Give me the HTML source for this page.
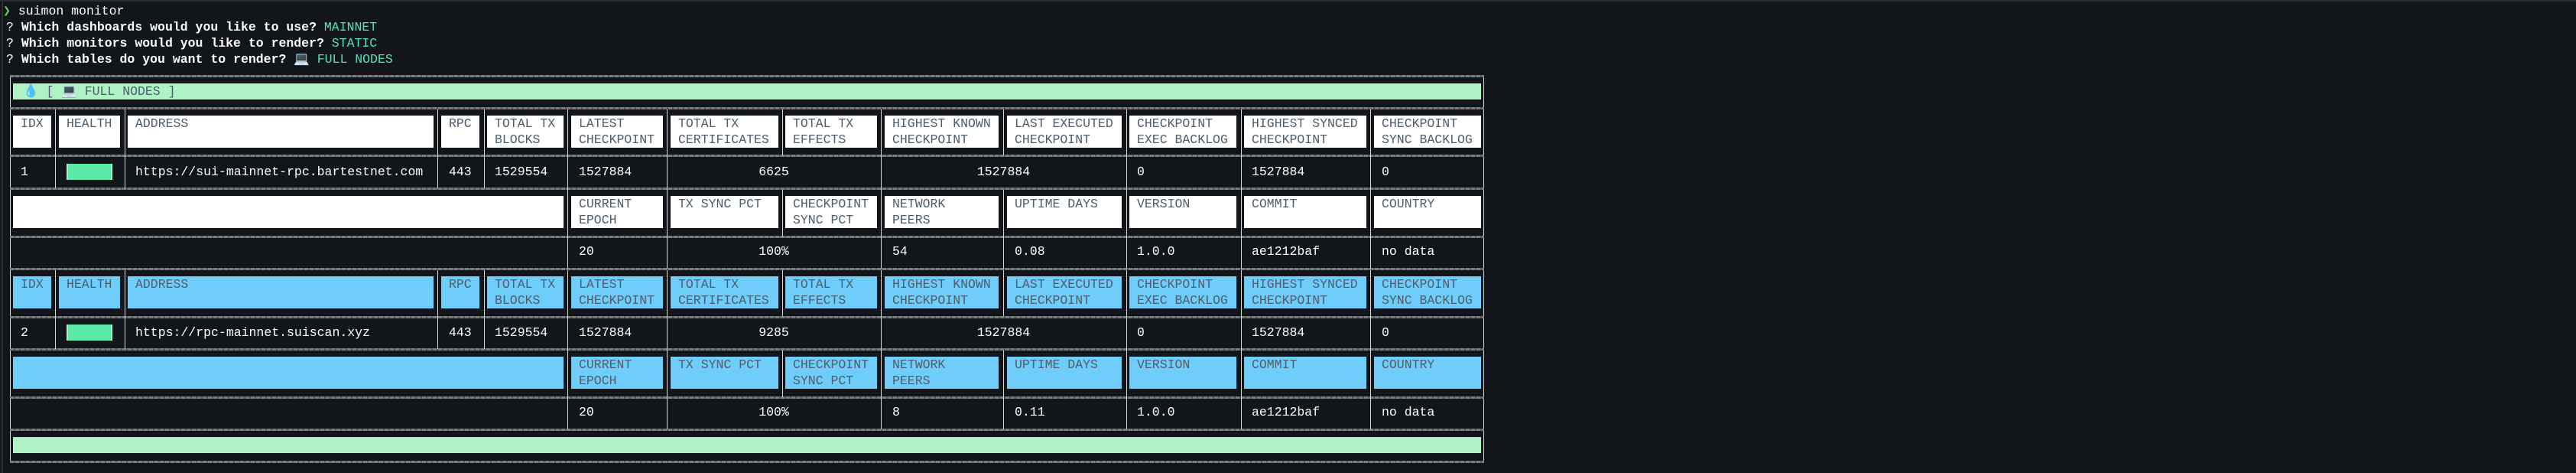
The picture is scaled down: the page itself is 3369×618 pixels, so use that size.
<!DOCTYPE html>
<html><head><meta charset="utf-8"><style>
*{margin:0;padding:0;box-sizing:border-box}
body{width:3369px;height:618px;background:#12161b;overflow:hidden;position:relative;font-family:"Liberation Mono","DejaVu Sans Mono",monospace;font-size:16.5px;line-height:21px;color:#fff}
div,span.a{position:absolute}
.t{white-space:pre;color:#fff}
.h{position:absolute;background:#fff;color:#4d5d6b;padding-left:10px;white-space:pre;line-height:21px}
.bl{background:#6fcdfb}
.hs{position:absolute;left:13px;width:1928px;height:3px;background:repeating-linear-gradient(90deg,#7a7d80 0 5px,#55595d 5px 7px)}
.vs{position:absolute;width:1px;background:#d8d8d8}
.d{position:absolute;white-space:pre;color:#fff}
.c{text-align:center}
.g{position:absolute;background:#5ce8a6;border-left:2px solid #9ff5cf;border-right:2px solid #9ff5cf}
</style></head><body>
<div class="t" style="left:4px;top:4px"><span style="color:#5fd35f">❯</span> suimon monitor</div>
<div class="t" style="left:8px;top:25px">? <b>Which dashboards would you like to use?</b> <span style="color:#4fe3c1">MAINNET</span></div>
<div class="t" style="left:8px;top:46px">? <b>Which monitors would you like to render?</b> <span style="color:#4fe3c1">STATIC</span></div>
<div class="t" style="left:8px;top:67px">? <b>Which tables do you want to render?</b> 💻 <span style="color:#4fe3c1">FULL NODES</span></div>

<div style="left:0;top:0;width:3369px;height:2px;background:#2a2e33"></div>
<div style="left:2px;top:0;width:2px;height:618px;background:#2a2e33"></div>

<!-- outer -->
<div class="vs" style="left:13px;top:99px;height:505px"></div>
<div class="vs" style="left:1940px;top:99px;height:505px"></div>
<div class="hs" style="top:98px"></div>
<div style="left:17px;top:109px;width:1920px;height:21px;background:#aef2c6;color:#4d5d6b;padding-left:13px;white-space:pre">💧 [ 💻 FULL NODES ]</div>

<div class="hs" style="top:140px"></div>
<div class="hs" style="top:202px"></div>
<div class="hs" style="top:245px"></div>
<div class="hs" style="top:308px"></div>
<div class="hs" style="top:350px"></div>
<div class="hs" style="top:413px"></div>
<div class="hs" style="top:455px"></div>
<div class="hs" style="top:518px"></div>
<div class="hs" style="top:560px"></div>
<div class="hs" style="top:602px"></div>

<!-- vertical separators table 1 rows 1-2 -->
<div class="vs" style="left:72px;top:143px;height:103px"></div>
<div class="vs" style="left:163px;top:143px;height:103px"></div>
<div class="vs" style="left:572px;top:143px;height:103px"></div>
<div class="vs" style="left:633px;top:143px;height:103px"></div>
<div class="vs" style="left:742px;top:143px;height:208px"></div>
<div class="vs" style="left:872px;top:143px;height:208px"></div>
<div class="vs" style="left:1023px;top:143px;height:60px"></div>
<div class="vs" style="left:1023px;top:248px;height:61px"></div>
<div class="vs" style="left:1152px;top:143px;height:208px"></div>
<div class="vs" style="left:1312px;top:143px;height:60px"></div>
<div class="vs" style="left:1312px;top:248px;height:103px"></div>
<div class="vs" style="left:1473px;top:143px;height:208px"></div>
<div class="vs" style="left:1623px;top:143px;height:208px"></div>
<div class="vs" style="left:1792px;top:143px;height:208px"></div>
<!-- table 2 -->
<div class="vs" style="left:72px;top:353px;height:103px"></div>
<div class="vs" style="left:163px;top:353px;height:103px"></div>
<div class="vs" style="left:572px;top:353px;height:103px"></div>
<div class="vs" style="left:633px;top:353px;height:103px"></div>
<div class="vs" style="left:742px;top:353px;height:208px"></div>
<div class="vs" style="left:872px;top:353px;height:208px"></div>
<div class="vs" style="left:1023px;top:353px;height:60px"></div>
<div class="vs" style="left:1023px;top:458px;height:61px"></div>
<div class="vs" style="left:1152px;top:353px;height:208px"></div>
<div class="vs" style="left:1312px;top:353px;height:60px"></div>
<div class="vs" style="left:1312px;top:458px;height:103px"></div>
<div class="vs" style="left:1473px;top:353px;height:208px"></div>
<div class="vs" style="left:1623px;top:353px;height:208px"></div>
<div class="vs" style="left:1792px;top:353px;height:208px"></div>

<!-- table 1 header -->
<div class="h" style="left:17px;top:151px;width:50px;height:42px">IDX</div>
<div class="h" style="left:77px;top:151px;width:80px;height:42px">HEALTH</div>
<div class="h" style="left:167px;top:151px;width:400px;height:42px">ADDRESS</div>
<div class="h" style="left:577px;top:151px;width:50px;height:42px">RPC</div>
<div class="h" style="left:637px;top:151px;width:100px;height:42px">TOTAL TX
BLOCKS</div>
<div class="h" style="left:747px;top:151px;width:120px;height:42px">LATEST
CHECKPOINT</div>
<div class="h" style="left:877px;top:151px;width:141px;height:42px;overflow:hidden">TOTAL TX
CERTIFICATES</div>
<div class="h" style="left:1027px;top:151px;width:120px;height:42px">TOTAL TX
EFFECTS</div>
<div class="h" style="left:1157px;top:151px;width:149px;height:42px">HIGHEST KNOWN
CHECKPOINT</div>
<div class="h" style="left:1317px;top:151px;width:150px;height:42px">LAST EXECUTED
CHECKPOINT</div>
<div class="h" style="left:1477px;top:151px;width:140px;height:42px">CHECKPOINT
EXEC BACKLOG</div>
<div class="h" style="left:1627px;top:151px;width:160px;height:42px">HIGHEST SYNCED
CHECKPOINT</div>
<div class="h" style="left:1797px;top:151px;width:140px;height:42px">CHECKPOINT
SYNC BACKLOG</div>

<div class="d" style="left:27px;top:214px">1</div>
<div class="g" style="left:87px;top:214px;width:60px;height:21px"></div>
<div class="d" style="left:177px;top:214px">https://sui-mainnet-rpc.bartestnet.com</div>
<div class="d" style="left:587px;top:214px">443</div>
<div class="d" style="left:647px;top:214px">1529554</div>
<div class="d" style="left:757px;top:214px">1527884</div>
<div class="d c" style="left:872px;top:214px;width:280px">6625</div>
<div class="d c" style="left:1152px;top:214px;width:321px">1527884</div>
<div class="d" style="left:1487px;top:214px">0</div>
<div class="d" style="left:1637px;top:214px">1527884</div>
<div class="d" style="left:1807px;top:214px">0</div>

<div class="h" style="left:17px;top:256px;width:720px;height:42px"></div>
<div class="h" style="left:747px;top:256px;width:120px;height:42px">CURRENT
EPOCH</div>
<div class="h" style="left:877px;top:256px;width:141px;height:42px">TX SYNC PCT</div>
<div class="h" style="left:1027px;top:256px;width:120px;height:42px">CHECKPOINT
SYNC PCT</div>
<div class="h" style="left:1157px;top:256px;width:149px;height:42px">NETWORK
PEERS</div>
<div class="h" style="left:1317px;top:256px;width:150px;height:42px">UPTIME DAYS</div>
<div class="h" style="left:1477px;top:256px;width:140px;height:42px">VERSION</div>
<div class="h" style="left:1627px;top:256px;width:160px;height:42px">COMMIT</div>
<div class="h" style="left:1797px;top:256px;width:140px;height:42px">COUNTRY</div>

<div class="d" style="left:757px;top:318px">20</div>
<div class="d c" style="left:872px;top:318px;width:280px">100%</div>
<div class="d" style="left:1167px;top:318px">54</div>
<div class="d" style="left:1327px;top:318px">0.08</div>
<div class="d" style="left:1487px;top:318px">1.0.0</div>
<div class="d" style="left:1637px;top:318px">ae1212baf</div>
<div class="d" style="left:1807px;top:318px">no data</div>

<!-- table 2 header -->
<div class="h bl" style="left:17px;top:361px;width:50px;height:42px">IDX</div>
<div class="h bl" style="left:77px;top:361px;width:80px;height:42px">HEALTH</div>
<div class="h bl" style="left:167px;top:361px;width:400px;height:42px">ADDRESS</div>
<div class="h bl" style="left:577px;top:361px;width:50px;height:42px">RPC</div>
<div class="h bl" style="left:637px;top:361px;width:100px;height:42px">TOTAL TX
BLOCKS</div>
<div class="h bl" style="left:747px;top:361px;width:120px;height:42px">LATEST
CHECKPOINT</div>
<div class="h bl" style="left:877px;top:361px;width:141px;height:42px;overflow:hidden">TOTAL TX
CERTIFICATES</div>
<div class="h bl" style="left:1027px;top:361px;width:120px;height:42px">TOTAL TX
EFFECTS</div>
<div class="h bl" style="left:1157px;top:361px;width:149px;height:42px">HIGHEST KNOWN
CHECKPOINT</div>
<div class="h bl" style="left:1317px;top:361px;width:150px;height:42px">LAST EXECUTED
CHECKPOINT</div>
<div class="h bl" style="left:1477px;top:361px;width:140px;height:42px">CHECKPOINT
EXEC BACKLOG</div>
<div class="h bl" style="left:1627px;top:361px;width:160px;height:42px">HIGHEST SYNCED
CHECKPOINT</div>
<div class="h bl" style="left:1797px;top:361px;width:140px;height:42px">CHECKPOINT
SYNC BACKLOG</div>

<div class="d" style="left:27px;top:424px">2</div>
<div class="g" style="left:87px;top:424px;width:60px;height:21px"></div>
<div class="d" style="left:177px;top:424px">https://rpc-mainnet.suiscan.xyz</div>
<div class="d" style="left:587px;top:424px">443</div>
<div class="d" style="left:647px;top:424px">1529554</div>
<div class="d" style="left:757px;top:424px">1527884</div>
<div class="d c" style="left:872px;top:424px;width:280px">9285</div>
<div class="d c" style="left:1152px;top:424px;width:321px">1527884</div>
<div class="d" style="left:1487px;top:424px">0</div>
<div class="d" style="left:1637px;top:424px">1527884</div>
<div class="d" style="left:1807px;top:424px">0</div>

<div class="h bl" style="left:17px;top:466px;width:720px;height:42px"></div>
<div class="h bl" style="left:747px;top:466px;width:120px;height:42px">CURRENT
EPOCH</div>
<div class="h bl" style="left:877px;top:466px;width:141px;height:42px">TX SYNC PCT</div>
<div class="h bl" style="left:1027px;top:466px;width:120px;height:42px">CHECKPOINT
SYNC PCT</div>
<div class="h bl" style="left:1157px;top:466px;width:149px;height:42px">NETWORK
PEERS</div>
<div class="h bl" style="left:1317px;top:466px;width:150px;height:42px">UPTIME DAYS</div>
<div class="h bl" style="left:1477px;top:466px;width:140px;height:42px">VERSION</div>
<div class="h bl" style="left:1627px;top:466px;width:160px;height:42px">COMMIT</div>
<div class="h bl" style="left:1797px;top:466px;width:140px;height:42px">COUNTRY</div>

<div class="d" style="left:757px;top:528px">20</div>
<div class="d c" style="left:872px;top:528px;width:280px">100%</div>
<div class="d" style="left:1167px;top:528px">8</div>
<div class="d" style="left:1327px;top:528px">0.11</div>
<div class="d" style="left:1487px;top:528px">1.0.0</div>
<div class="d" style="left:1637px;top:528px">ae1212baf</div>
<div class="d" style="left:1807px;top:528px">no data</div>

<div style="left:17px;top:571px;width:1920px;height:21px;background:#aef2c6"></div>
</body></html>
